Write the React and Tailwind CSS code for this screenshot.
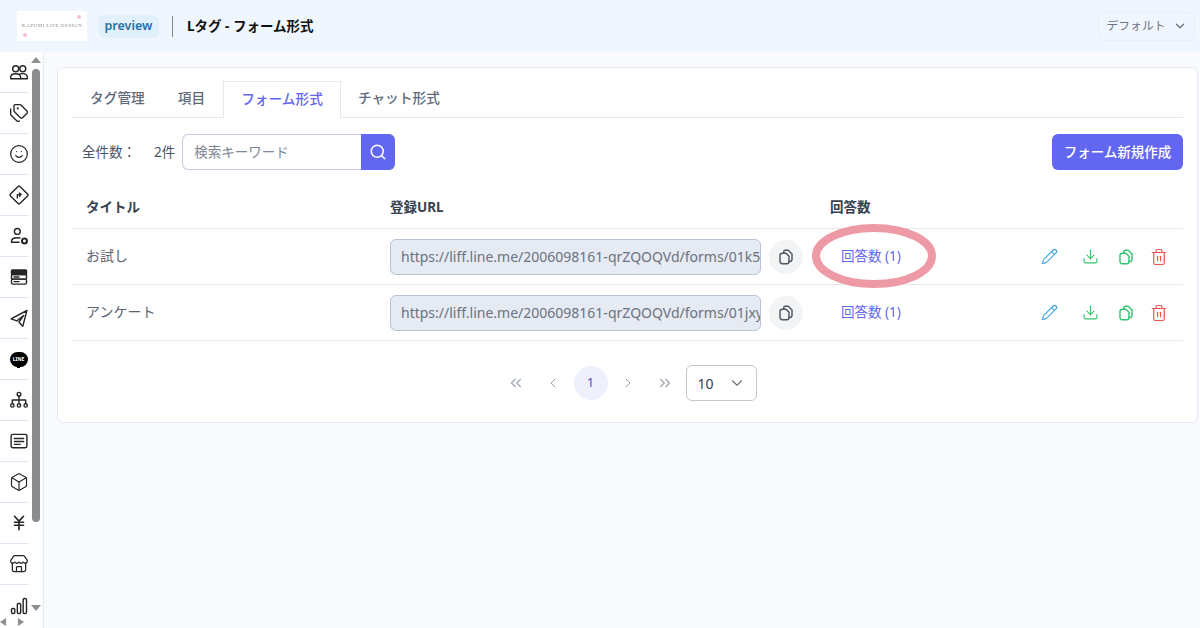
import { Search, ChevronDown, ChevronLeft, ChevronRight, ChevronsLeft, ChevronsRight, Pencil, Download, Trash2, Tags, Smile, Box, Store, JapaneseYen } from 'lucide-react';

const Ico = ({ children, size = 20 }) => (
    <svg width={size} height={size} viewBox="0 0 24 24" fill="none" stroke="currentColor" strokeWidth="1.7" strokeLinecap="round" strokeLinejoin="round">
        {children}
    </svg>
);

const CopyIcon = ({ size = 18, className = '' }) => (
    <svg width={size} height={size} viewBox="0 0 24 24" fill="none" stroke="currentColor" strokeWidth="1.9" strokeLinecap="round" strokeLinejoin="round" className={className}>
        <path d="M9 7V5a2 2 0 0 1 2-2h4l5 5v7a3 3 0 0 1-3 3h-1" />
        <path d="M7 7h5l4 4v7a3 3 0 0 1-3 3H7a3 3 0 0 1-3-3v-8a3 3 0 0 1 3-3z" />
    </svg>
);

const sideIcons = [
    <Ico key="users">
        <circle cx="8" cy="8" r="3.6" /><circle cx="16.5" cy="8" r="3.6" />
        <path d="M2 20v-1.5C2 15.5 4.5 14 8 14s6 1.5 6 4.5V20z" />
        <path d="M13 14.3c1-.3 2.3-.4 3.5-.4 3.5 0 5.5 1.6 5.5 4.6V20h-8" />
    </Ico>,
    <Tags key="tags" size={20} strokeWidth={1.6} />,
    <Smile key="smile" size={20} strokeWidth={1.5} />,
    <Ico key="dir">
        <rect x="4" y="4" width="16" height="16" rx="1.5" transform="rotate(45 12 12)" />
        <path d="M10 15.5v-4h4.5M12.5 9.500l2 2-2 2" />
    </Ico>,
    <Ico key="usergear">
        <circle cx="10" cy="6.5" r="3.5" />
        <path d="M3 19.5v-1c0-3 3-4.500 7-4.500 1 0 2 .1 3 .4M3 19.5h9" />
        <circle cx="18.5" cy="18" r="3" fill="#fff" strokeWidth="2.6" />
    </Ico>,
    <Ico key="server">
        <rect x="3" y="3.5" width="18" height="5.5" rx="1" fill="currentColor" />
        <rect x="3" y="9" width="18" height="5.5" rx="1" />
        <rect x="3" y="14.5" width="18" height="6" rx="1.5" />
        <path d="M6 12h6M6 17.5h6" />
    </Ico>,
    <Ico key="send">
        <path d="M21.5 3 2.5 13l7 2.5 8-6.500-5.500 8 4.500 5z" />
    </Ico>,
    <div key="line" className="flex items-center justify-center relative w-[19px] h-[18px]">
        <div className="w-[18px] h-[15px] rounded-[8px] bg-black flex items-center justify-center text-white text-[5px] font-bold leading-none">LINE</div>
        <div className="absolute bottom-0 left-[8px] w-[3px] h-[4px] bg-black" />
    </div>,
    <Ico key="network">
        <circle cx="12" cy="5" r="2.2" />
        <path d="M12 7.5V12M4 16v-4h16v4M12 12v4" />
        <circle cx="4" cy="18.5" r="2" /><circle cx="12" cy="18.5" r="2" /><circle cx="20" cy="18.5" r="2" />
    </Ico>,
    <Ico key="msg">
        <rect x="2.5" y="4" width="19" height="16" rx="2" />
        <path d="M6.5 9h11M6.5 12.5h11M6.5 16h7" />
    </Ico>,
    <Box key="box" size={20} strokeWidth={1.4} />,
    <JapaneseYen key="yen" size={18} strokeWidth={2.2} className="ml-px" />,
    <Store key="store" size={20} strokeWidth={1.5} />,
    <Ico key="bars">
        <rect x="3" y="15" width="4" height="6" rx="1.5" />
        <rect x="10" y="9" width="4" height="12" rx="1.5" />
        <rect x="17" y="3" width="4" height="18" rx="1.5" />
    </Ico>,
];

const Sidebar = () => (
    <aside className="w-[44px] shrink-0 flex bg-white border-r border-[#e3edf8] relative overflow-hidden">
        <div className="w-[29px] shrink-0">
            {sideIcons.map((icon, i) => (
                <div key={i} className="h-[41px] pl-[9px] border-b border-[#dde6f3] last:border-b-0 flex items-center text-[#262626]">
                    {icon}
                </div>
            ))}
        </div>
        <div className="flex-1 flex flex-col items-center pt-[5px] pr-[1px]">
            <div className="w-0 h-0 border-x-[5px] border-x-transparent border-b-[6px] border-b-[#8f8f8f]" />
            <div className="w-[8px] h-[453px] mt-[6px] rounded-full bg-[#8c8c8c]" />
            <div className="w-0 h-0 mt-[83px] border-x-[5px] border-x-transparent border-t-[6px] border-t-[#8f8f8f]" />
        </div>
        <div className="absolute left-0 bottom-[2px] w-[26px] flex justify-between">
            <div className="w-0 h-0 border-y-[4px] border-y-transparent border-r-[6px] border-r-[#8f8f8f]" />
            <div className="w-0 h-0 mr-[2px] border-y-[4px] border-y-transparent border-l-[6px] border-l-[#8f8f8f]" />
        </div>
    </aside>
);

const rows = [
    { title: 'お試し', url: 'https://liff.line.me/2006098161-qrZQOQVd/forms/01k5gmr8xh3', circled: true },
    { title: 'アンケート', url: 'https://liff.line.me/2006098161-qrZQOQVd/forms/01jxyt7kq2w' },
];

const Row = ({ title, url, circled }) => (
    <div className="grid grid-cols-[304px_440px_1fr] items-center h-[56px] border-b border-[#e5e7eb]">
        <div className="pl-[14px] pb-[2px] text-[14px] text-[#5b6472]">{title}</div>
        <div className="pl-[14px] flex items-center gap-2">
            <input
                readOnly
                value={url}
                className="w-[371px] h-[36px] pl-[10px] pr-0 rounded-md border border-[#b8c3d4] bg-[#e6eaf2] text-[14px] text-[#6b7280] outline-none"
            />
            <div className="w-[34px] h-[34px] rounded-full bg-[#f3f4f6] flex items-center justify-center text-[#4b5563]">
                <CopyIcon size={18} />
            </div>
        </div>
        <div className="flex items-center">
            <div className="relative pl-[25px] w-[200px] text-[13.5px] text-[#6366f1]">
                回答数 (1)
                {circled && (
                    <svg width="126" height="68" viewBox="0 0 126 68" className="absolute left-[-5px] top-[-24px]">
                        <ellipse cx="63" cy="34" rx="58" ry="28" fill="none" stroke="#ee9aa6" strokeWidth="8" />
                    </svg>
                )}
            </div>
            <div className="flex items-center ml-[25px]">
                <Pencil size={17} strokeWidth={1.6} className="text-[#45a4e0]" />
                <Download size={17} strokeWidth={1.6} className="text-[#38c172] ml-[24px]" />
                <CopyIcon size={18} className="text-[#38c172] ml-[18px]" />
                <Trash2 size={18} strokeWidth={1.6} className="text-[#ef5350] ml-[15px]" />
            </div>
        </div>
    </div>
);

const App = () => {
    return (
        <div className="w-[1200px] h-[628px] overflow-hidden flex flex-col bg-[#f8fafe] font-['Noto_Sans','Noto_Sans_CJK_JP',sans-serif]">
            <header className="h-[52px] shrink-0 bg-[#f0f6fd] flex items-center pl-[17px] pr-[5px]">
                <div className="w-[70px] h-[30px] bg-white relative flex items-center justify-center text-[5px] tracking-[0.5px] text-[#8b8b8b] whitespace-nowrap font-['Liberation_Serif',serif]">
                    KAZUMI LIFE DESIGN
                    <span className="absolute right-[6px] top-[4px] w-[4px] h-[4px] rounded-full bg-[#f4c2d0]" />
                    <span className="absolute left-[6px] bottom-[4px] w-[4px] h-[4px] rounded-full bg-[#f4c2d0]" />
                </div>
                <div className="ml-[11px] w-[61px] h-[23px] rounded-md bg-[#e2f0fb] flex items-center justify-center text-[12.5px] font-semibold text-[#2272a9]">preview</div>
                <div className="ml-[13px] w-px h-[21px] bg-[#8a8a8a]" />
                <div className="ml-[14px] text-[13.5px] font-bold text-[#111]">Lタグ - フォーム形式</div>
                <div className="ml-auto w-[97px] h-[29px] rounded-md border border-[#e8eef6] flex items-center justify-center gap-[7px] text-[11.8px] text-[#6b7280]">
                    デフォルト
                    <ChevronDown size={14} strokeWidth={2.2} />
                </div>
            </header>
            <div className="flex-1 flex min-h-0">
                <Sidebar />
                <main className="flex-1 pl-[13px] pr-[2px] pt-[15px]">
                    <section className="bg-white rounded-md border border-[#e5eaf3] px-[14px] pt-[13px] pb-[21px]">
                        <div className="flex h-[37px] border-b border-[#e5e7eb] text-[13.7px] font-medium text-[#5f6b7c]">
                            <div className="pl-[18px] pr-[17px] h-[36px] pb-[2px] flex items-center">タグ管理</div>
                            <div className="pl-[16px] pr-[18px] h-[36px] pb-[2px] flex items-center">項目</div>
                            <div className="px-[17px] h-[37px] pb-[2px] flex items-center bg-white border border-b-0 border-[#e5e7eb] text-[#6366f1] -mb-px">フォーム形式</div>
                            <div className="px-[17px] h-[36px] pb-[2px] flex items-center">チャット形式</div>
                        </div>
                        <div className="flex items-center mt-[16px] h-[36px]">
                            <span className="ml-[10px] text-[13.5px] text-[#4b5563]">全件数：</span>
                            <span className="ml-[18px] text-[13.5px] text-[#4b5563]">2件</span>
                            <div className="ml-[7px] flex">
                                <div className="w-[179px] h-[36px] pl-[11px] flex items-center rounded-l-md border border-r-0 border-[#c5cdda] text-[13.5px] text-[#7d8694]">検索キーワード</div>
                                <div className="w-[34px] h-[36px] rounded-r-md bg-[#6366f1] flex items-center justify-center text-white">
                                    <Search size={18} strokeWidth={2} />
                                </div>
                            </div>
                            <button className="ml-auto w-[131px] h-[36px] rounded-md bg-[#6366f1] text-white text-[13.5px] font-medium">フォーム新規作成</button>
                        </div>
                        <div className="grid grid-cols-[304px_440px_1fr] items-center h-[59px] pt-[16px] border-b border-[#e5e7eb] text-[13.5px] font-bold text-[#374151]">
                            <div className="pl-[14px]">タイトル</div>
                            <div className="pl-[14px]">登録URL</div>
                            <div className="pl-[14px]">回答数</div>
                        </div>
                        {rows.map((row) => (
                            <Row key={row.title} {...row} />
                        ))}
                        <div className="flex items-center justify-center mt-[24px] h-[36px] text-[#9ca3af] pl-[8px]">
                            <ChevronsLeft size={18} strokeWidth={1.5} />
                            <ChevronLeft size={16} strokeWidth={1.5} className="ml-[20px]" />
                            <div className="ml-[13px] w-[34px] h-[34px] rounded-full bg-[#eef1fc] flex items-center justify-center text-[13px] text-[#4f52b8]">1</div>
                            <ChevronRight size={16} strokeWidth={1.5} className="ml-[12px]" />
                            <ChevronsRight size={18} strokeWidth={1.5} className="ml-[20px]" />
                            <div className="ml-[12px] w-[71px] h-[36px] rounded-md border border-[#c2c8d2] flex items-center justify-between pl-[11px] pr-[10px] text-[14px] text-[#374151]">
                                10
                                <ChevronDown size={18} strokeWidth={1.5} className="text-[#6b7280]" />
                            </div>
                        </div>
                    </section>
                </main>
            </div>
        </div>
    );
};

export default App;
